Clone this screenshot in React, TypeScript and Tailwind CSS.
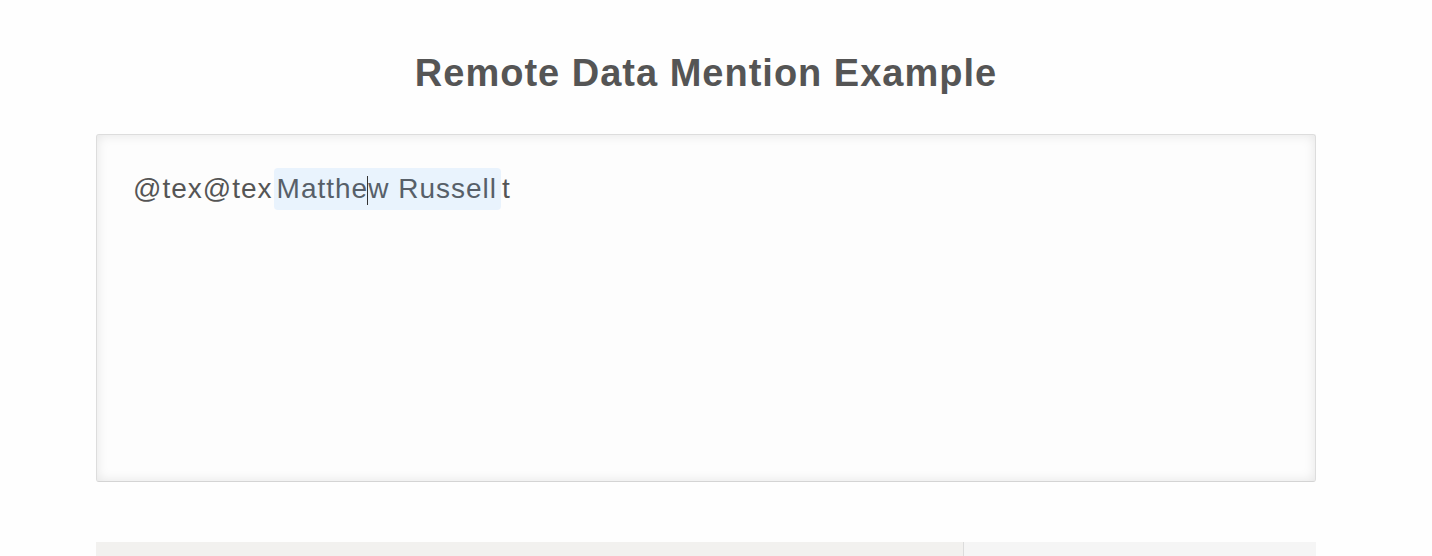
import React from "react";

export default function App() {
  return (
    <div className="min-h-[556px] bg-[#fefefe] overflow-hidden" style={{ fontFamily: '"Liberation Sans", Arial, sans-serif' }}>
      <div className="w-[1220px] ml-[96px]">
        <h1 className="pt-[51px] text-center text-[38px] leading-[44px] font-bold tracking-[1px] text-[#555555]">
          Remote Data Mention Example
        </h1>
        <div className="mt-[39px] h-[348px] rounded-[3px] border border-[#dddddd] border-b-[#d4d4d4] bg-[#fdfdfd] shadow-[inset_0_0_12px_rgba(0,0,0,0.1)] px-[37px] pt-[33px]">
          <div className="flex items-center text-[28px] leading-[42px] tracking-[1px] text-[#555555]">
            <span className="-ml-[1px]">@tex@tex</span>
            <span className="ml-[1px] rounded-[4px] bg-[#e9f3fd] pl-[3px] pr-[4px] text-[#575f69]">
              Matthe
              <span className="relative inline-block w-0 h-[29px] align-middle">
                <span className="absolute -left-[1px] top-0 h-[29px] w-[1px] bg-[#333]" />
              </span>
              w Russell
            </span>
            <span className="ml-[1px]">t</span>
          </div>
        </div>
        <div className="mt-[60px] flex h-[20px]">
          <div className="w-[868px] bg-[#f2f1ef] border-r border-[#dcdcdc]" />
          <div className="flex-1 bg-[#f5f5f5]" />
        </div>
      </div>
    </div>
  );
}
